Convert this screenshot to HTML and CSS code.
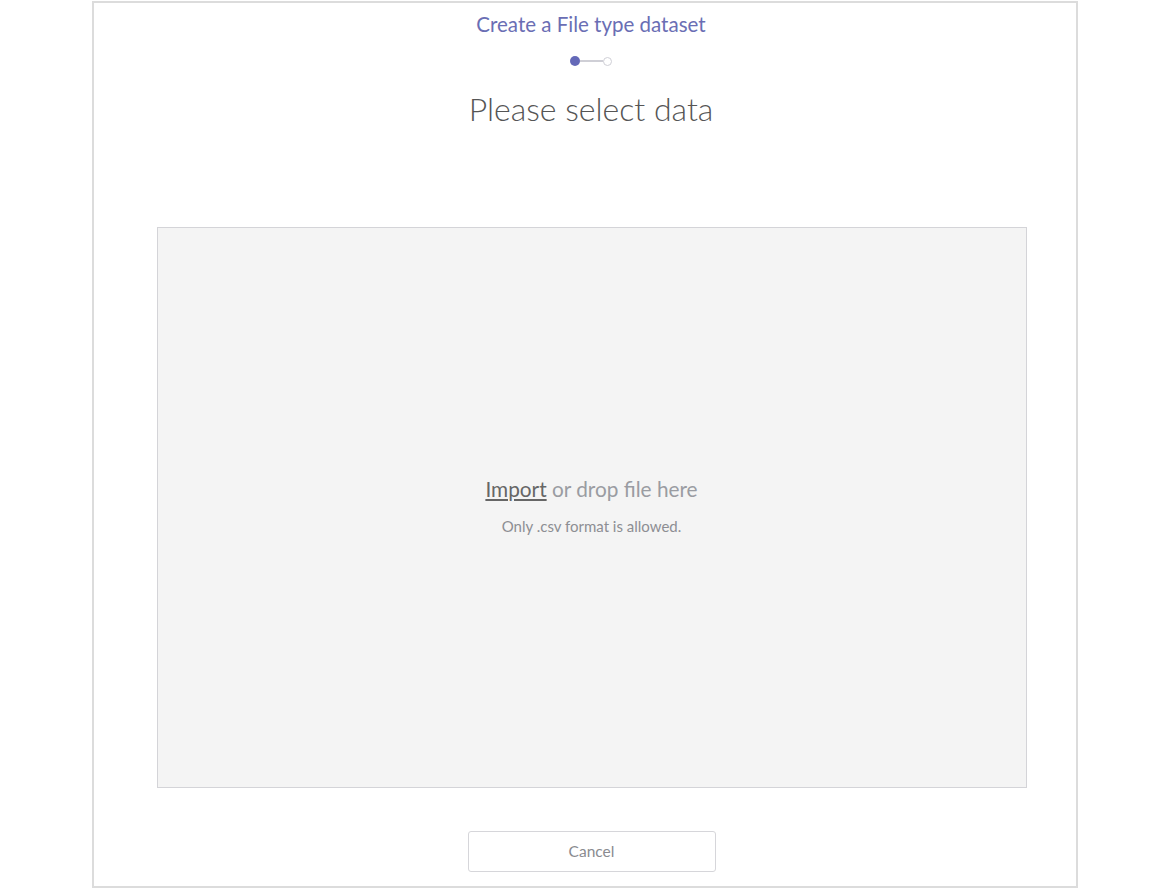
FILE: index.html
```html
<!DOCTYPE html>
<html>
<head>
<meta charset="utf-8">
<link rel="stylesheet" href="styles.css">
</head>
<body>
<div class="dialog">
  <div class="title">Create a File type dataset</div>
  <div class="stepper">
    <span class="dot active"></span><span class="line"></span><span class="dot"></span>
  </div>
  <h1 class="heading">Please select data</h1>
  <div class="drop">
    <div class="drop-main"><a class="import">Import</a> or drop file here</div>
    <div class="drop-sub">Only .csv format is allowed.</div>
  </div>
  <div class="footer">
    <button class="cancel">Cancel</button>
  </div>
</div>
</body>
</html>
```

FILE: styles.css
```css
html, body {
  margin: 0;
  padding: 0;
  background: #fff;
  font-family: Lato, "Open Sans", sans-serif;
}
.dialog {
  box-sizing: border-box;
  margin: 1px 0 0 92px;
  width: 986px;
  height: 887px;
  padding-left: 12px;
  border: 2px solid #dcdcdc;
  display: flex;
  flex-direction: column;
  align-items: center;
}
.title {
  margin-top: 8px;
  font-size: 20.5px;
  line-height: 26px;
  color: #6a6eb4;
}
.stepper {
  margin-top: 18px;
  display: flex;
  align-items: center;
  height: 12px;
}
.dot {
  box-sizing: border-box;
  width: 9px;
  height: 9px;
  border-radius: 50%;
  border: 1.5px solid #cfcfd6;
  background: #fff;
}
.dot.active {
  width: 10px;
  height: 10px;
  border: none;
  background: #6469b8;
}
.line {
  width: 23px;
  height: 1.5px;
  background: #cfcfd6;
}
.heading {
  margin: 22px 0 0;
  font-size: 32px;
  line-height: 40px;
  font-weight: 300;
  color: #555;
}
.drop {
  box-sizing: border-box;
  margin: 98px 0 0 1px;
  width: 870px;
  height: 561px;
  border: 1px solid #d4d4d8;
  background: #f4f4f4;
  display: flex;
  flex-direction: column;
  align-items: center;
  padding-top: 248px;
}
.drop-main {
  font-size: 20.8px;
  line-height: 26px;
  color: #9a9ca2;
}
.import {
  color: #666;
  text-decoration: underline;
  cursor: pointer;
}
.drop-sub {
  margin-top: 15px;
  font-size: 15px;
  line-height: 18px;
  color: #8d8e93;
}
.footer {
  margin: 43px 0 0 1px;
}
.cancel {
  box-sizing: border-box;
  width: 248px;
  height: 41px;
  border: 1px solid #d6d6da;
  border-radius: 3px;
  background: #fff;
  font-family: Lato, "Open Sans", sans-serif;
  font-size: 15.5px;
  color: #8a8b90;
  padding-bottom: 2px;
}
```
